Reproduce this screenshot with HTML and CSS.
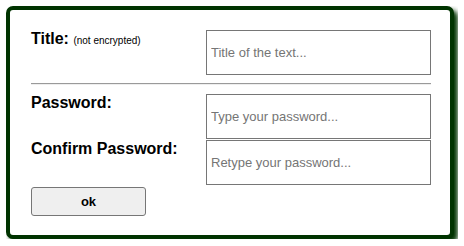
FILE: index.html
```html
<!DOCTYPE html>
<html lang="en">
<head>
  <meta charset="UTF-8">
  <title>Encrypt</title>
  <link rel="stylesheet" href="styles.css">
</head>
<body>
  <div class="dialog">
    <div class="row">
      <label class="label">Title: <small>(not encrypted)</small></label>
      <input type="text" class="field" placeholder="Title of the text...">
    </div>
    <hr class="sep">
    <div class="row">
      <label class="label">Password:</label>
      <input type="password" class="field" placeholder="Type your password...">
    </div>
    <div class="row">
      <label class="label">Confirm Password:</label>
      <input type="password" class="field" placeholder="Retype your password...">
    </div>
    <button class="ok-btn">ok</button>
  </div>
</body>
</html>
```

FILE: styles.css
```css
*{
  margin:0;
  padding:0;
  box-sizing: border-box;
}
body{
  margin: 6px;
  background-color: #fff;
  font-family: "Liberation Sans", Arial, sans-serif;
}
.dialog{
  width: 448px;
  height: 233px;
  border: 4px solid #003300;
  border-radius: 7px;
  box-shadow: 4px 4px 5px #003300;
  background-color: #fff;
  padding: 20px 19px 0 21px;
}
.row{
  display: grid;
  grid-template-columns: 175px 225px;
  align-items: start;
  margin-bottom: 1px;
}
.label{
  font-size: 16px;
  font-weight: bold;
  color: #000;
}
.label small{
  font-size: 10px;
  font-weight: normal;
}
.field{
  height: 45px;
  border: 1px solid #767676;
  padding: 0 4px;
  font-family: "Liberation Sans", Arial, sans-serif;
  font-size: 13px;
  outline: none;
}
.field::placeholder{
  color: #757575;
}
.sep{
  width: 400px;
  border: 0;
  border-top: 1px solid #9a9a9a;
  border-bottom: 1px solid #eee;
  margin: 8px 0 9px;
}
.ok-btn{
  margin-top: 1px;
  width: 115px;
  height: 29px;
  background-color: #efefef;
  border: 1px solid #767676;
  border-radius: 3px;
  font-family: "Liberation Sans", Arial, sans-serif;
  font-size: 13px;
  font-weight: bold;
  color: #000;
}
```
